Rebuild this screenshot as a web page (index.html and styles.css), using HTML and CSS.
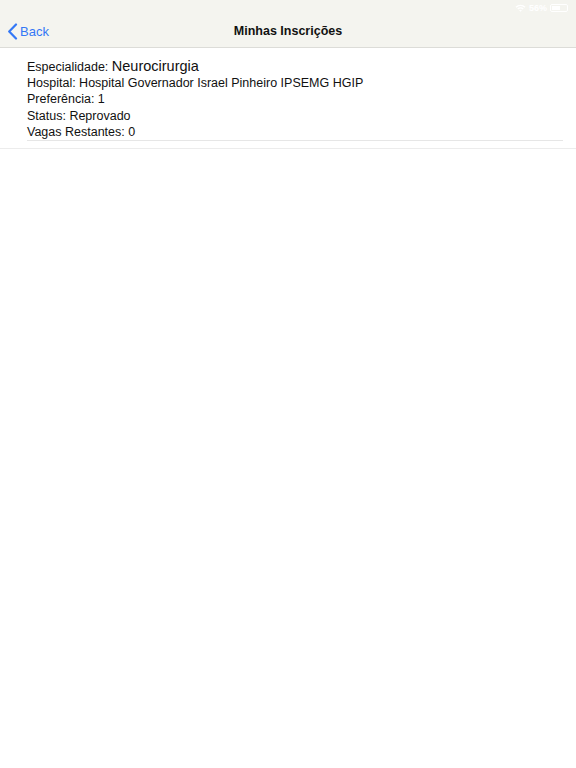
FILE: index.html
```html
<!DOCTYPE html>
<html>
<head>
<meta charset="utf-8">
<link rel="stylesheet" href="styles.css">
</head>
<body>
<div class="header">
  <div class="status">
    <span class="status-right">
      <svg width="11" height="8" viewBox="0 0 11 8"><path d="M0.5 2.8a7 7 0 0 1 10 0l-1 1a5.6 5.6 0 0 0-8 0z M2.3 4.6a4.4 4.4 0 0 1 6.4 0l-1 1a3 3 0 0 0-4.4 0z M4.1 6.4a1.9 1.9 0 0 1 2.8 0L5.5 7.8z" fill="#fff"/></svg>
      <span class="pct">56%</span>
      <span class="battery"><span class="level"></span></span>
    </span>
  </div>
  <div class="navbar">
    <div class="back">
      <svg width="11" height="17" viewBox="0 0 11 17"><path d="M9 1.5L2.2 8.5 9 15.5" fill="none" stroke="#3478f6" stroke-width="2.2" stroke-linecap="round" stroke-linejoin="round"/></svg>
      <span>Back</span>
    </div>
    <div class="title">Minhas Inscrições</div>
  </div>
</div>
<div class="list">
  <div class="item">
    <div class="line">Especialidade: <span class="big">Neurocirurgia</span></div>
    <div class="line">Hospital: Hospital Governador Israel Pinheiro IPSEMG HGIP</div>
    <div class="line">Preferência: 1</div>
    <div class="line">Status: Reprovado</div>
    <div class="line">Vagas Restantes: 0</div>
  </div>
</div>
</body>
</html>
```
FILE: styles.css
```css
html, body {
  margin: 0;
  padding: 0;
  background: #ffffff;
  font-family: "Liberation Sans", Arial, sans-serif;
  color: #111;
}
.header {
  background: #f4f4ef;
  border-bottom: 1px solid #dcdcd8;
}
.status {
  height: 15px;
  display: flex;
  justify-content: flex-end;
  align-items: center;
  padding-right: 8px;
}
.status-right {
  display: flex;
  align-items: center;
  gap: 3px;
  color: #fff;
  font-size: 9px;
  font-weight: bold;
}
.battery {
  width: 18px;
  height: 8px;
  border: 1px solid #fff;
  border-radius: 2px;
  display: flex;
  padding: 1px;
  box-sizing: border-box;
}
.level {
  width: 55%;
  background: #fff;
}
.navbar {
  height: 32px;
  display: flex;
  align-items: center;
  justify-content: center;
  position: relative;
}
.back {
  position: absolute;
  left: 7px;
  top: 0;
  height: 32px;
  display: flex;
  align-items: center;
  gap: 2px;
  color: #3478f6;
  font-size: 13px;
}
.title {
  font-size: 12.5px;
  font-weight: bold;
  color: #111;
}
.list {
  border-bottom: 1px solid #ececec;
  padding-bottom: 7px;
}
.item {
  margin: 0 13px 0 27px;
  padding-top: 11px;
  padding-bottom: 0;
  border-bottom: 1px solid #e6e6e6;
}
.line {
  font-size: 12.5px;
  line-height: 16.2px;
  height: 16.2px;
  color: #111;
}
.big {
  font-size: 14.5px;
  line-height: 14px;
}
```
